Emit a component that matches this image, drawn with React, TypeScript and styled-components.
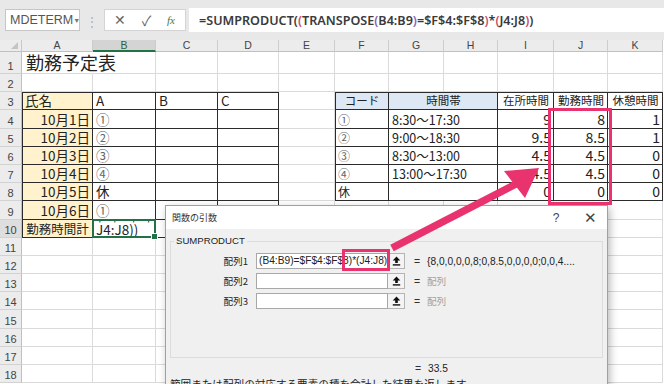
import React from "react";
import styled, { createGlobalStyle } from "styled-components";

const JP = `"Noto Sans CJK JP", "Noto Sans", sans-serif`;
const UI = `"Liberation Sans", Arial, "Noto Sans CJK JP", sans-serif`;
const PINK = "#e8336e";
const DARK = "#2b2b2b";
const GRID = "#dadada";

const GlobalStyle = createGlobalStyle`
  html, body { margin: 0; padding: 0; background: #fff; }
  body { width: 664px; height: 384px; overflow: hidden; }
`;

const Page = styled.div`
  position: relative;
  width: 664px;
  height: 384px;
  overflow: hidden;
  background: #fff;
  font-family: ${JP};
`;

/* ---------- formula bar ---------- */
const Toolbar = styled.div`
  height: 40px;
  box-sizing: border-box;
  background: #e8e8e8;
  display: flex;
  align-items: flex-start;
  padding: 9px 0 0 5px;
`;
const NameBox = styled.div`
  width: 75px;
  height: 22px;
  box-sizing: border-box;
  background: #fff;
  border: 1px solid #c6c6c6;
  display: flex;
  align-items: center;
  justify-content: space-between;
  padding: 0 5px 0 4px;
  font-family: ${UI};
  font-size: 12.5px;
  color: #555;
`;
const Caret = styled.span`
  font-size: 7px;
  color: #777;
`;
const Grip = styled.div`
  width: 24px;
  height: 22px;
  display: flex;
  align-items: center;
  justify-content: center;
  color: #b0b0b0;
  font-size: 12px;
`;
const FxButtons = styled.div`
  width: 82px;
  height: 22px;
  box-sizing: border-box;
  background: #fff;
  border: 1px solid #d4d4d4;
  display: flex;
  align-items: center;
  justify-content: space-between;
  padding: 0 10px 0 9px;
  color: #666;
  font-family: ${UI};
  font-size: 14px;
`;
const FxLabel = styled.span`
  font-family: "Liberation Serif", serif;
  font-style: italic;
  font-size: 11px;
  color: #3d7a4f;
`;
const FormulaInput = styled.div`
  flex: 1;
  height: 24px;
  margin: -1px 0 0 3px;
  background: #fff;
  display: flex;
  align-items: center;
  padding-left: 10px;
  font-family: "Noto Sans", sans-serif;
  font-weight: 600;
  font-size: 12.6px;
  color: #3a3a3a;
  white-space: nowrap;
  overflow: hidden;
`;
const Paren = styled.span<{ $c: string }>`
  color: ${(p) => p.$c};
`;

/* ---------- sheet ---------- */
const Sheet = styled.div`
  display: grid;
  grid-template-columns: 22px 71px 63px 62px 61px 56px 54px 55px 54px 56px 54px 55px;
  grid-template-rows: 12px 22px repeat(17, 18.2px);
`;
const Corner = styled.div`
  box-sizing: border-box;
  background: #ececec;
  border-right: 1px solid #c8c8c8;
  border-bottom: 1px solid #c0c0c0;
  display: flex;
  align-items: flex-end;
  justify-content: flex-end;
  padding: 0 3px 2px 0;
`;
const CornerMark = styled.div`
  width: 0;
  height: 0;
  border-left: 7px solid transparent;
  border-bottom: 7px solid #c4c4c4;
`;
const ColHead = styled.div<{ $sel?: boolean }>`
  box-sizing: border-box;
  background: ${(p) => (p.$sel ? "#d4d4d4" : "#ececec")};
  border-right: 1px solid #cdcdcd;
  border-bottom: ${(p) => (p.$sel ? "2px solid #217346" : "1px solid #c0c0c0")};
  font-family: ${UI};
  font-size: 10.5px;
  color: ${(p) => (p.$sel ? "#2c5e3c" : "#444")};
  display: flex;
  align-items: center;
  justify-content: center;
  line-height: 1;
`;
const RowHead = styled.div<{ $sel?: boolean }>`
  box-sizing: border-box;
  background: ${(p) => (p.$sel ? "#dedede" : "#ececec")};
  border-right: 1px solid #c0c0c0;
  border-bottom: 1px solid #d2d2d2;
  font-family: ${UI};
  font-size: 11px;
  color: #444;
  display: flex;
  align-items: flex-end;
  justify-content: center;
  padding-bottom: 1px;
`;

type Align = "left" | "right" | "center";
const justify = { left: "flex-start", right: "flex-end", center: "center" };

const Cell = styled.div<{
  $bg?: string;
  $align?: Align;
  $box?: boolean;
  $top?: boolean;
  $left?: boolean;
  $size?: number;
  $span?: number;
  $noRight?: boolean;
  $muted?: boolean;
}>`
  box-sizing: border-box;
  min-width: 0;
  grid-column: span ${(p) => p.$span ?? 1};
  background: ${(p) => p.$bg ?? "transparent"};
  border-right: 1px solid ${(p) => (p.$box ? DARK : p.$noRight ? "transparent" : GRID)};
  border-bottom: 1px solid ${(p) => (p.$box ? DARK : GRID)};
  box-shadow: ${(p) =>
    p.$top && p.$left
      ? `inset 1px 1px 0 ${DARK}`
      : p.$top
      ? `inset 0 1px 0 ${DARK}`
      : p.$left
      ? `inset 1px 0 0 ${DARK}`
      : "none"};
  display: flex;
  align-items: flex-end;
  justify-content: ${(p) => justify[p.$align ?? "left"]};
  padding: 0 2px 0 3px;
  font-size: ${(p) => p.$size ?? 13.5}px;
  line-height: 17px;
  color: ${(p) => (p.$muted ? "#666" : "#222")};
  white-space: nowrap;
`;
const Title = styled(Cell)`
  align-items: flex-end;
  font-size: 18px;
  padding-left: 4px;
  line-height: 21px;
`;
const ActiveCell = styled.div`
  position: relative;
  box-sizing: border-box;
  border: 2px solid #217346;
  margin: -1px 0 0 -1px;
  background: #fff;
  display: flex;
  flex-direction: column;
  justify-content: flex-end;
  padding-left: 2px;
  font-size: 13.5px;
  line-height: 14px;
  color: #222;
  white-space: nowrap;
  &::after {
    content: "";
    position: absolute;
    right: -4px;
    bottom: -4px;
    width: 5px;
    height: 5px;
    background: #217346;
    border: 1px solid #fff;
  }
`;
const ActiveClip = styled.div`
  height: 16px;
  overflow: hidden;
  display: flex;
  flex-direction: column;
  justify-content: flex-end;
`;

/* ---------- dialog ---------- */
const Dialog = styled.div`
  position: absolute;
  left: 165px;
  top: 205px;
  width: 443px;
  height: 200px;
  box-sizing: border-box;
  background: #f0f0f0;
  border: 1px solid #a0a0a0;
  box-shadow: 2px 3px 8px rgba(0, 0, 0, 0.28);
  display: flex;
  flex-direction: column;
  font-family: ${JP};
  color: #222;
`;
const TitleBar = styled.div`
  height: 23px;
  flex: none;
  background: #fff;
  display: flex;
  align-items: center;
  padding-left: 6px;
  font-size: 9px;
  color: #333;
`;
const TitleText = styled.span`
  flex: 1;
`;
const TitleButton = styled.span<{ $size: number }>`
  width: 34px;
  text-align: center;
  font-family: ${UI};
  font-size: ${(p) => p.$size}px;
  color: #444;
  line-height: 1;
`;
const Group = styled.fieldset`
  margin: 5px 4px 0 4px;
  padding: 5px 0 0 0;
  height: 124px;
  box-sizing: border-box;
  border: 1px solid #dcdcdc;
  min-width: 0;
  flex: none;
`;
const Legend = styled.legend`
  margin-left: 3px;
  padding: 0 2px;
  font-family: ${UI};
  font-size: 9.6px;
  line-height: 14px;
  color: #222;
`;
const ArgRow = styled.div`
  display: flex;
  align-items: center;
  height: 16px;
  margin-bottom: 4px;
`;
const ArgLabel = styled.span`
  width: 77px;
  margin-right: 8px;
  text-align: right;
  font-size: 9.6px;
  color: #222;
`;
const ArgInput = styled.div`
  width: 132px;
  height: 16px;
  box-sizing: border-box;
  background: #fff;
  border: 1px solid #a8a8a8;
  padding-left: 2px;
  font-family: ${UI};
  font-size: 10.2px;
  line-height: 14px;
  white-space: nowrap;
  overflow: hidden;
  color: #222;
`;
const RefButton = styled.div`
  width: 17px;
  height: 16px;
  box-sizing: border-box;
  background: #f4f4f4;
  border: 1px solid #b4b4b4;
  border-left: none;
  display: flex;
  align-items: center;
  justify-content: center;
`;
const Eq = styled.span`
  width: 13px;
  margin-left: 9px;
  font-family: ${UI};
  font-size: 10.5px;
  color: #333;
`;
const ArgValue = styled.span<{ $muted?: boolean }>`
  font-family: ${(p) => (p.$muted ? JP : UI)};
  font-size: ${(p) => (p.$muted ? 9.6 : 10.2)}px;
  color: ${(p) => (p.$muted ? "#a0a0a0" : "#222")};
  white-space: nowrap;
`;
const ResultRow = styled.div`
  display: flex;
  align-items: center;
  height: 14px;
  margin-top: 3px;
  padding-left: 240px;
  flex: none;
`;
const Description = styled.div`
  margin-top: 2px;
  padding-left: 4px;
  font-size: 10.6px;
  line-height: 14px;
  color: #222;
  white-space: nowrap;
  flex: none;
`;

/* ---------- overlays ---------- */
const Highlight = styled.div<{ $x: number; $y: number; $w: number; $h: number }>`
  position: absolute;
  left: ${(p) => p.$x}px;
  top: ${(p) => p.$y}px;
  width: ${(p) => p.$w}px;
  height: ${(p) => p.$h}px;
  box-sizing: border-box;
  border: 3px solid ${PINK};
  pointer-events: none;
`;
const ArrowLayer = styled.svg`
  position: absolute;
  left: 0;
  top: 0;
  width: 664px;
  height: 384px;
  pointer-events: none;
`;

const RefIcon = () => (
  <svg width="9" height="10" viewBox="0 0 9 10">
    <path d="M4.5 0.5 L8.3 4.6 L5.8 4.6 L5.8 7 L3.2 7 L3.2 4.6 L0.7 4.6 Z" fill="#111" />
    <rect x="0.8" y="8.2" width="7.4" height="1.4" fill="#111" />
  </svg>
);

/* ---------- data ---------- */
const COLS = ["A", "B", "C", "D", "E", "F", "G", "H", "I", "J", "K"];
const YELLOW = "#fff2cc";
const BLUE = "#dde8f4";
const dates = ["10月1日", "10月2日", "10月3日", "10月4日", "10月5日", "10月6日"];
const codesB = ["①", "②", "③", "④", "休", "①"];
const codesF = ["①", "②", "③", "④", "休"];
const times = ["8:30～17:30", "9:00～18:30", "8:30～13:00", "13:00～17:30", ""];
const colI = ["9", "9.5", "4.5", "4.5", "0"];
const colJ = ["8", "8.5", "4.5", "4.5", "0"];
const colK = ["1", "1", "0", "0", "0"];

type Spec = {
  text?: React.ReactNode;
  bg?: string;
  align?: Align;
  box?: boolean;
  top?: boolean;
  left?: boolean;
  size?: number;
  span?: number;
  muted?: boolean;
  skip?: boolean;
  active?: boolean;
  title?: boolean;
  noRight?: boolean;
};

function spec(r: number, c: number): Spec {
  if (r === 1 && c === 0) return { text: "勤務予定表", title: true, noRight: true };
  // table 1: A3:D10
  if (r >= 3 && r <= 10 && c <= 3) {
    const s: Spec = { box: true, top: r === 3, left: c === 0 };
    if (c === 0) {
      s.bg = YELLOW;
      if (r === 3) s.text = "氏名";
      else if (r <= 9) {
        s.text = dates[r - 4];
        s.align = "right";
      } else {
        s.text = "勤務時間計";
        s.align = "center";
        s.size = 12.5;
      }
    } else if (c === 1) {
      if (r === 3) s.text = "A";
      else if (r <= 9) {
        s.text = codesB[r - 4];
        s.muted = codesB[r - 4] !== "休";
      } else s.active = true;
    } else if (r === 3) s.text = c === 2 ? "B" : "C";
    return s;
  }
  // table 2: F3:K8
  if (r >= 3 && r <= 8 && c >= 5) {
    const s: Spec = { box: true, top: r === 3, left: c === 5 };
    if (c === 7) return { skip: true };
    if (r === 3) {
      s.align = "center";
      s.size = 11.5;
      if (c === 5) {
        s.text = "コード";
        s.bg = BLUE;
      } else if (c === 6) {
        s.text = "時間帯";
        s.bg = BLUE;
        s.span = 2;
      } else s.text = ["在所時間", "勤務時間", "休憩時間"][c - 8];
      return s;
    }
    const i = r - 4;
    if (c === 5) {
      s.text = codesF[i];
      s.muted = codesF[i] !== "休";
      s.size = 12;
    } else if (c === 6) {
      s.text = times[i];
      s.span = 2;
      s.size = 12.5;
    } else {
      s.text = [colI, colJ, colK][c - 8][i];
      s.align = "right";
      s.size = 14;
    }
    return s;
  }
  return {};
}

const rows = Array.from({ length: 18 }, (_, i) => i + 1);

export default function App() {
  return (
    <Page>
      <GlobalStyle />
      <Toolbar>
        <NameBox>
          MDETERM<Caret>▼</Caret>
        </NameBox>
        <Grip>⋮</Grip>
        <FxButtons>
          <span>✕</span>
          <span>✓</span>
          <FxLabel>fx</FxLabel>
        </FxButtons>
        <FormulaInput>
          =SUMPRODUCT(<Paren $c="#c9506d">(</Paren>TRANSPOSE<Paren $c="#8a63b8">(</Paren>B4:B9
          <Paren $c="#8a63b8">)</Paren>=$F$4:$F$8<Paren $c="#c9506d">)</Paren>*<Paren $c="#c9506d">(</Paren>
          J4:J8<Paren $c="#c9506d">)</Paren>)
        </FormulaInput>
      </Toolbar>

      <Sheet>
        <Corner>
          <CornerMark />
        </Corner>
        {COLS.map((c) => (
          <ColHead key={c} $sel={c === "B"}>
            {c}
          </ColHead>
        ))}
        {rows.map((r) => (
          <React.Fragment key={r}>
            <RowHead $sel={r === 10}>{r}</RowHead>
            {COLS.map((col, c) => {
              const s = spec(r, c);
              if (s.skip) return null;
              if (s.active)
                return (
                  <ActiveCell key={col}>
                    <ActiveClip>
                      <span>$F$4:$F$8)*(</span>
                      <span>J4:J8))</span>
                    </ActiveClip>
                  </ActiveCell>
                );
              const Comp = s.title ? Title : Cell;
              return (
                <Comp
                  key={col}
                  $bg={s.bg}
                  $align={s.align}
                  $box={s.box}
                  $top={s.top}
                  $left={s.left}
                  $size={s.size}
                  $span={s.span}
                  $muted={s.muted}
                  $noRight={s.noRight}
                >
                  {s.text}
                </Comp>
              );
            })}
          </React.Fragment>
        ))}
      </Sheet>

      <Dialog>
        <TitleBar>
          <TitleText>関数の引数</TitleText>
          <TitleButton $size={12}>?</TitleButton>
          <TitleButton $size={15}>✕</TitleButton>
        </TitleBar>
        <Group>
          <Legend>SUMPRODUCT</Legend>
          <ArgRow>
            <ArgLabel>配列1</ArgLabel>
            <ArgInput>(B4:B9)=$F$4:$F$8)*(J4:J8)</ArgInput>
            <RefButton>
              <RefIcon />
            </RefButton>
            <Eq>=</Eq>
            <ArgValue>{"{8,0,0,0,0,8;0,8.5,0,0,0,0;0,0,4...."}</ArgValue>
          </ArgRow>
          <ArgRow>
            <ArgLabel>配列2</ArgLabel>
            <ArgInput />
            <RefButton>
              <RefIcon />
            </RefButton>
            <Eq>=</Eq>
            <ArgValue $muted>配列</ArgValue>
          </ArgRow>
          <ArgRow>
            <ArgLabel>配列3</ArgLabel>
            <ArgInput />
            <RefButton>
              <RefIcon />
            </RefButton>
            <Eq>=</Eq>
            <ArgValue $muted>配列</ArgValue>
          </ArgRow>
        </Group>
        <ResultRow>
          <Eq>=</Eq>
          <ArgValue>33.5</ArgValue>
        </ResultRow>
        <Description>範囲または配列の対応する要素の積を合計した結果を返します。</Description>
      </Dialog>

      <Highlight $x={548} $y={108} $w={64} $h={97} />
      <Highlight $x={342} $y={249} $w={48} $h={22} />
      <ArrowLayer viewBox="0 0 664 384">
        <line x1="392" y1="248" x2="516" y2="184" stroke={PINK} strokeWidth="7.5" strokeLinecap="butt" />
        <polygon points="539,168 504,171 525,198" fill={PINK} />
      </ArrowLayer>
    </Page>
  );
}
